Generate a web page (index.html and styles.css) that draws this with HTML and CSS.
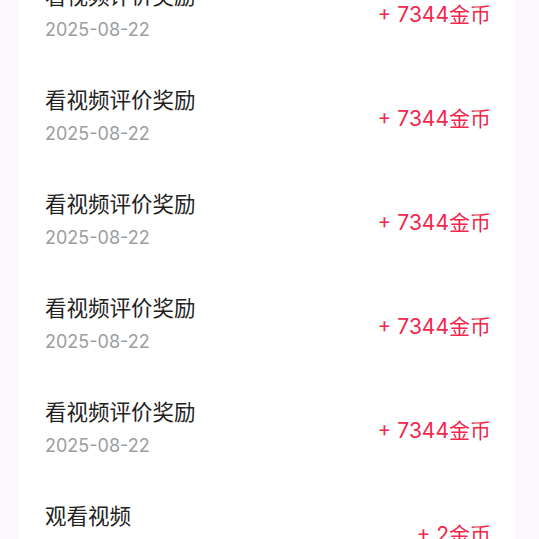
FILE: index.html
```html
<!DOCTYPE html>
<html lang="zh-CN">
  <head>
    <meta charset="UTF-8" />
    <meta name="viewport" content="width=device-width, initial-scale=1.0" />
    <title>金币明细</title>
    <link rel="stylesheet" href="styles.css">
  </head>
  <body>
    <div class="record-list">
      <div class="record">
        <div class="record-info">
          <div class="record-title">看视频评价奖励</div>
          <div class="record-date">2025-08-22</div>
        </div>
        <div class="record-amount">+ 7344金币</div>
      </div>
      <div class="record">
        <div class="record-info">
          <div class="record-title">看视频评价奖励</div>
          <div class="record-date">2025-08-22</div>
        </div>
        <div class="record-amount">+ 7344金币</div>
      </div>
      <div class="record">
        <div class="record-info">
          <div class="record-title">看视频评价奖励</div>
          <div class="record-date">2025-08-22</div>
        </div>
        <div class="record-amount">+ 7344金币</div>
      </div>
      <div class="record">
        <div class="record-info">
          <div class="record-title">看视频评价奖励</div>
          <div class="record-date">2025-08-22</div>
        </div>
        <div class="record-amount">+ 7344金币</div>
      </div>
      <div class="record">
        <div class="record-info">
          <div class="record-title">看视频评价奖励</div>
          <div class="record-date">2025-08-22</div>
        </div>
        <div class="record-amount">+ 7344金币</div>
      </div>
      <div class="record">
        <div class="record-info">
          <div class="record-title">观看视频</div>
          <div class="record-date">2025-08-22</div>
        </div>
        <div class="record-amount">+ 2金币</div>
      </div>
    </div>
  </body>
</html>
```

FILE: styles.css
```css
* {
  margin: 0;
  padding: 0;
  box-sizing: border-box;
}

body {
  background: #fcf8fc;
  font-family: Inter, "Noto Sans CJK SC", sans-serif;
  overflow: hidden;
}

/* list is scrolled, first row is cut off at the top */
.record-list {
  margin: -39px 24px 0 19px;
  background: #ffffff;
}

.record {
  display: flex;
  justify-content: space-between;
  align-items: center;
  height: 104px;
  padding: 0 24px 0 26px;
}

.record-title {
  font-size: 21.5px;
  line-height: 32px;
  color: #222;
}

.record-date {
  margin-top: 2px;
  font-size: 18px;
  line-height: 32px;
  color: #9d9d9d;
}

.record-amount {
  font-size: 21px;
  color: #f0284f;
}
```
